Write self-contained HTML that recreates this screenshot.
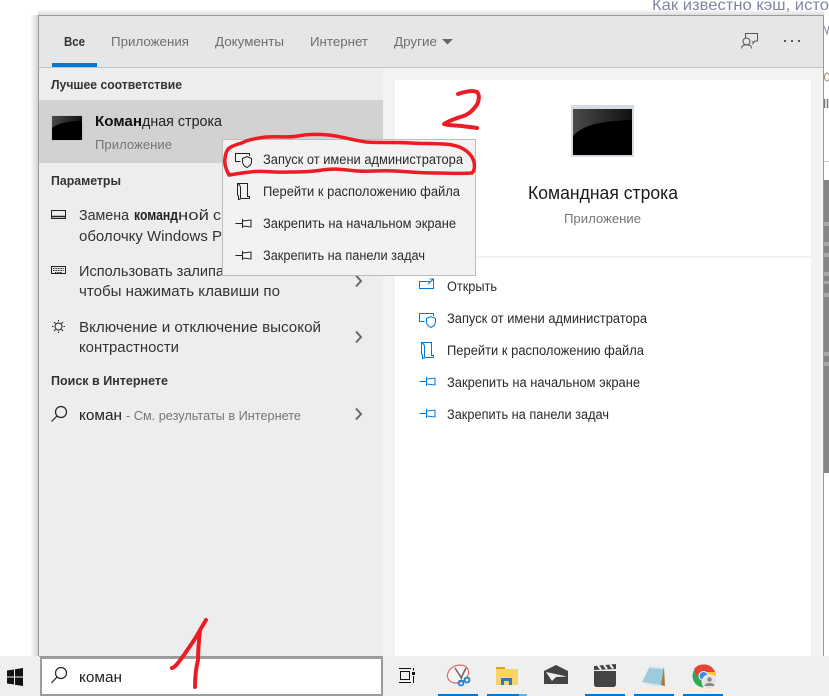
<!DOCTYPE html>
<html lang="ru">
<head>
<meta charset="utf-8">
<title>Поиск</title>
<style>
html,body{margin:0;padding:0;background:#fff;width:829px;height:696px;overflow:hidden}
svg{display:block}
text{font-family:"Liberation Sans","DejaVu Sans",sans-serif;font-size:13px;fill:#1f1f1f;white-space:pre}
.tab{fill:#6e6e6e}
.h{font-weight:bold;fill:#333}
.g{fill:#767676}
.b{font-size:15px;fill:#333}
.m{font-size:13.500px;fill:#2a2a2a}
.ic{fill:none;stroke:#222;stroke-width:1}
.bl{fill:none;stroke:#0078d7;stroke-width:1}
.red{fill:none;stroke:#ed1c24;stroke-linecap:round;stroke-linejoin:round}
</style>
</head>
<body>
<svg xmlns="http://www.w3.org/2000/svg" width="829" height="696" viewBox="0 0 829 696">
<defs>
<linearGradient id="sl" x1="0" x2="1" y1="0" y2="0"><stop offset="0" stop-color="#fff"/><stop offset="1" stop-color="#d4d4d4"/></linearGradient>
<linearGradient id="st" x1="0" x2="0" y1="0" y2="1"><stop offset="0" stop-color="#fff"/><stop offset="1" stop-color="#dcdcdc"/></linearGradient>
<linearGradient id="cmd" x1="0" x2="1" y1="0" y2="0"><stop offset="0" stop-color="#4a4a4a"/><stop offset="1" stop-color="#111"/></linearGradient>
<g id="pin"><path d="M0 5H7M7 .5V9.500M7 2.500L15.500 1.500V8.500L7 7.500"/></g>
<g id="adm"><path d="M5.500 8.500H.5V.5H14.500V3M7.500 5.500L12 3.500L16.500 5.500V9C16.500 11.500 14 13.500 12 14.500C10 13.500 7.500 11.500 7.500 9Z"/></g>
<g id="fold"><path d="M.5 .5H10.500V13.500H12.500V15.500H4.500L1.500 16.500V13L.5 12ZM.5 .5C2.500 1.500 3.500 3 3.500 5V15"/></g>
</defs>

<rect width="829" height="696" fill="#fff"/>

<!-- window shadow -->
<rect x="30" y="15" width="8" height="641" fill="url(#sl)"/>
<rect x="38" y="9" width="786" height="6" fill="url(#st)"/>

<!-- background page -->
<text x="652" y="10" style="font-size:16px;fill:#7f86a0" textLength="177" lengthAdjust="spacingAndGlyphs">Как известно кэш, исто</text>
<path d="M824 26L827 34L829 26" fill="none" stroke="#7f86a0"/>
<ellipse cx="827" cy="77" rx="2.500" ry="4" fill="none" stroke="#9a8a6a"/>
<path d="M824.500 99V108M827.500 99V108" stroke="#777" stroke-width="1.500"/>
<rect x="824" y="161" width="5" height="1" fill="#ccc"/>
<rect x="824" y="180" width="5" height="293" fill="#858585"/>
<g fill="#a8a8a8">
<rect x="824" y="222" width="5" height="4"/><rect x="824" y="242" width="5" height="4"/><rect x="824" y="253" width="5" height="4"/><rect x="824" y="272" width="5" height="4"/><rect x="824" y="281" width="5" height="3"/><rect x="824" y="293" width="5" height="4"/><rect x="824" y="352" width="5" height="4"/><rect x="824" y="362" width="5" height="4"/>
</g>

<!-- window -->
<rect x="38" y="15" width="786" height="641" fill="#9a9a9a"/>
<rect x="39" y="16" width="784" height="640" fill="#f3f3f3"/>
<rect x="39" y="16" width="784" height="51" fill="#e6e6e6"/>
<rect x="39" y="67" width="784" height="1" fill="#c4c4c4"/>
<rect x="39" y="68" width="344" height="588" fill="#ededed"/>
<rect x="395" y="80" width="416" height="576" fill="#fff"/>
<rect x="395" y="256" width="416" height="2" fill="#f2f2f2"/>

<!-- tabs -->
<text x="64" y="46" textLength="21" lengthAdjust="spacingAndGlyphs" style="font-weight:bold;fill:#333">Все</text>
<text class="tab" x="111" y="46" textLength="78" lengthAdjust="spacingAndGlyphs">Приложения</text>
<text class="tab" x="215" y="46" textLength="69" lengthAdjust="spacingAndGlyphs">Документы</text>
<text class="tab" x="310" y="46" textLength="58" lengthAdjust="spacingAndGlyphs">Интернет</text>
<text class="tab" x="394" y="46" textLength="43" lengthAdjust="spacingAndGlyphs">Другие</text>
<path d="M442 39H453L447.500 44.500Z" fill="#666"/>
<rect x="52" y="63" width="45" height="4" fill="#0078d7"/>

<!-- header right icons -->
<g fill="none" stroke="#555" stroke-width="1">
<path d="M745.500 38V33.500H757.500V41H755L753 43.500V41"/>
<circle cx="746.500" cy="41.500" r="3.500"/>
<path d="M741.500 48.500C741.500 45.500 744 44.800 746.500 44.800C749 44.800 751.500 45.500 751.500 48.500"/>
</g>
<g fill="#555"><rect x="784" y="40" width="2" height="2"/><rect x="791" y="40" width="2" height="2"/><rect x="798" y="40" width="2" height="2"/></g>

<!-- left list -->
<text class="h" x="51" y="89" textLength="131" lengthAdjust="spacingAndGlyphs">Лучшее соответствие</text>
<rect x="39" y="100" width="344" height="63" fill="#d2d2d2"/>
<rect x="51" y="115" width="32" height="26" fill="#c4c8cc"/>
<rect x="52" y="116" width="30" height="24" fill="url(#cmd)"/>
<path d="M52 128C58 123 68 121 82 121V140H52Z" fill="#000"/>
<text x="95" y="126" style="font-size:15px;font-weight:bold;fill:#111" textLength="47" lengthAdjust="spacingAndGlyphs">Коман</text>
<text x="142" y="126" style="font-size:15px;fill:#222" textLength="80" lengthAdjust="spacingAndGlyphs">дная строка</text>
<text class="g" x="95" y="149" textLength="77" lengthAdjust="spacingAndGlyphs">Приложение</text>

<text class="h" x="51" y="185" textLength="70" lengthAdjust="spacingAndGlyphs">Параметры</text>

<text class="b" x="79" y="220" textLength="50" lengthAdjust="spacingAndGlyphs">Замена</text>
<text x="134" y="220" style="font-size:15px;font-weight:bold;fill:#222" textLength="44" lengthAdjust="spacingAndGlyphs">команд</text>
<text class="b" x="178" y="220" textLength="31" lengthAdjust="spacingAndGlyphs">ной</text>
<text class="b" x="213" y="220" textLength="8" lengthAdjust="spacingAndGlyphs">с</text>
<text class="b" x="79" y="241" textLength="143" lengthAdjust="spacingAndGlyphs">оболочку Windows P</text>
<text class="b" x="79" y="276" textLength="145" lengthAdjust="spacingAndGlyphs">Использовать залипа</text>
<text class="b" x="79" y="296" textLength="201" lengthAdjust="spacingAndGlyphs">чтобы нажимать клавиши по</text>
<text class="b" x="79" y="332" textLength="242" lengthAdjust="spacingAndGlyphs">Включение и отключение высокой</text>
<text class="b" x="79" y="352" textLength="100" lengthAdjust="spacingAndGlyphs">контрастности</text>

<text class="h" x="51" y="385" textLength="117" lengthAdjust="spacingAndGlyphs">Поиск в Интернете</text>
<text x="79" y="420" style="font-size:15px;fill:#222" textLength="43" lengthAdjust="spacingAndGlyphs">коман</text>
<text class="g" x="126" y="420" textLength="175" lengthAdjust="spacingAndGlyphs">- См. результаты в Интернете</text>

<!-- left icons -->
<g class="ic">
<rect x="51.500" y="210.500" width="14" height="8"/><path d="M52 216.500H65" stroke-width="1.500"/>
<rect x="51.500" y="266.500" width="14" height="7"/>
</g>
<path d="M53 268.500H64M53 270.500H64M55 272.500H62" stroke="#222" stroke-width="1" stroke-dasharray="1 .6"/>
<g class="ic">
<circle cx="58.500" cy="326.500" r="3.500"/>
<path d="M58.500 320V321.500M58.500 331.500V333M52 326.500H53.500M63.500 326.500H65M54 322L55.500 323.500M61.500 329.500L63 331M63 322L61.500 323.500M55.500 329.500L54 331"/>
<circle cx="61" cy="412" r="5.500" stroke-width="1.200"/><path d="M57 416L51.500 421.500" stroke-width="1.200"/>
</g>
<g fill="none" stroke="#666" stroke-width="2">
<path d="M356 275.500L361 281L356 286.500"/>
<path d="M356 331.500L361 337L356 342.500"/>
<path d="M356 408.500L361 414L356 419.500"/>
</g>

<!-- context menu -->
<rect x="222.500" y="139.500" width="253" height="136" fill="#f2f2f2" stroke="#bdbdbd"/>
<text class="m" x="263" y="164" textLength="200" lengthAdjust="spacingAndGlyphs">Запуск от имени администратора</text>
<text class="m" x="263" y="196" textLength="197" lengthAdjust="spacingAndGlyphs">Перейти к расположению файла</text>
<text class="m" x="263" y="228" textLength="193" lengthAdjust="spacingAndGlyphs">Закрепить на начальном экране</text>
<text class="m" x="263" y="260" textLength="162" lengthAdjust="spacingAndGlyphs">Закрепить на панели задач</text>
<use href="#adm" x="235" y="153" class="ic"/>
<use href="#fold" x="237" y="183" class="ic"/>
<use href="#pin" x="235.500" y="218.500" class="ic"/>
<use href="#pin" x="235.500" y="250.500" class="ic"/>

<!-- right panel -->
<rect x="571" y="105" width="63" height="52" fill="#d5dbe3"/>
<rect x="573" y="109" width="59" height="46" fill="url(#cmd)"/>
<path d="M573 136C583 125 600 121 632 120V155H573Z" fill="#000"/>
<text x="528" y="199" style="font-size:18px;fill:#1a1a1a" textLength="150" lengthAdjust="spacingAndGlyphs">Командная строка</text>
<text class="g" x="564" y="223" textLength="77" lengthAdjust="spacingAndGlyphs">Приложение</text>

<text class="m" x="447" y="291" textLength="50" lengthAdjust="spacingAndGlyphs">Открыть</text>
<text class="m" x="447" y="323" textLength="200" lengthAdjust="spacingAndGlyphs">Запуск от имени администратора</text>
<text class="m" x="447" y="355" textLength="197" lengthAdjust="spacingAndGlyphs">Перейти к расположению файла</text>
<text class="m" x="447" y="387" textLength="193" lengthAdjust="spacingAndGlyphs">Закрепить на начальном экране</text>
<text class="m" x="447" y="419" textLength="162" lengthAdjust="spacingAndGlyphs">Закрепить на панели задач</text>
<path class="bl" d="M430 281.500H419.500V288.500H433.500V283M428 284L433.500 279M429.500 279H433.500V283"/>
<use href="#adm" x="419" y="313" class="bl"/>
<use href="#fold" x="421" y="342" class="bl"/>
<use href="#pin" x="419.500" y="376.500" class="bl"/>
<use href="#pin" x="419.500" y="408.500" class="bl"/>

<!-- taskbar -->
<rect x="0" y="656" width="829" height="40" fill="#eef0f0"/>
<rect x="39" y="656" width="344" height="1" fill="#9a9a9a"/>
<rect x="41" y="658" width="341" height="37" fill="#fff" stroke="#9c9c9c" stroke-width="2"/>
<g fill="#111">
<path d="M7 670.500L14 669.500V676.500H7ZM15 669.300L23 668V676.500H15ZM7 677.500H14V684.500L7 683.500ZM15 677.500H23V686L15 684.700Z"/>
</g>
<circle cx="61" cy="673" r="5.500" fill="none" stroke="#222" stroke-width="1.200"/>
<path d="M57 677L51.500 683" stroke="#222" stroke-width="1.200"/>
<text x="79" y="682" style="font-size:15px;fill:#222" textLength="43" lengthAdjust="spacingAndGlyphs">коман</text>

<!-- task view -->
<g fill="none" stroke="#111" stroke-width="1">
<path d="M399 668.500H411M399 682.500H411"/>
<rect x="400.500" y="671.500" width="9" height="8"/>
<path d="M413.500 668V670.500M413.500 676V683"/>
</g>
<rect x="412" y="672" width="3" height="3" fill="#111"/>

<!-- snipping -->
<ellipse cx="458" cy="674" rx="11" ry="8.500" transform="rotate(-25 458 674)" fill="#f6f3f3" stroke="#e66a6a" stroke-width="1.200"/>
<path d="M455 668L462 679M466 668L461 678" stroke="#666" stroke-width="1.500"/>
<circle cx="461" cy="683" r="2.500" fill="none" stroke="#1e7fc9" stroke-width="1.800"/>
<circle cx="467" cy="680" r="2.500" fill="none" stroke="#1e7fc9" stroke-width="1.800"/>

<!-- explorer -->
<path d="M496 667H505V670H496Z" fill="#e0a21b"/>
<rect x="496" y="669" width="22" height="16" fill="#fbd469"/>
<path d="M501 685V678H512V685H509V681H504V685Z" fill="#2a78c6"/>

<!-- mail -->
<path d="M544 671L556 665L568 671V684H544Z" fill="#444"/>
<path d="M546 672L567 676.500L556 677L552 681Z" fill="#eee"/>

<!-- clapper -->
<path d="M594 671H616V684C616 686 615 687 613 687H597C595 687 594 686 594 684Z" fill="#444"/>
<path d="M594 666L616 664V669L594 670Z" fill="#444"/>
<path d="M598 665.500L601 669.500M604 665L607 669M610 664.500L613 668.500" stroke="#eef0f0" stroke-width="2"/>

<!-- notepad -->
<path d="M650 666L664 667V686L642 682Z" fill="#9ccbdc"/>
<path d="M650 666L664 667L663 669L650 668Z" fill="#dfe9ec"/>
<path d="M664 667L665 686L661 685Z" fill="#a87a3a"/>
<path d="M642 682L661 685L664 687L648 685Z" fill="#dbe7ea"/>

<!-- chrome -->
<circle cx="704" cy="676" r="11.500" fill="#34a853"/>
<path d="M704 664.500A11.500 11.500 0 0 1 715 672H704C700 672 698 674 697 677L694 669A11.500 11.500 0 0 1 704 664.500Z" fill="#ea4335"/>
<path d="M707 672H715.500L716 677L708 682Z" fill="#fbc02d"/>
<circle cx="703.500" cy="676" r="5" fill="#fff"/><circle cx="703.500" cy="676" r="4" fill="#4285f4"/>
<circle cx="709.500" cy="682" r="7.500" fill="#e4e4e4" stroke="#fff" stroke-width=".6"/>
<circle cx="709.500" cy="679.500" r="2.300" fill="#8a8a8a"/>
<path d="M704.500 686C705 683.500 707 683 709.500 683C712 683 714 683.500 714.500 686Z" fill="#8a8a8a"/>

<!-- taskbar underlines -->
<g fill="#0078d7">
<rect x="438" y="694" width="40" height="2"/>
<rect x="487" y="694" width="32" height="2"/>
<rect x="585" y="694" width="40" height="2"/>
<rect x="634" y="694" width="40" height="2"/>
<rect x="683" y="694" width="40" height="2"/>
</g>
<rect x="519" y="694" width="8" height="2" fill="#66aee7"/>

<!-- red annotations -->
<path class="red" stroke-width="3.500" d="M229 175C226 169 224 164 225 158C226 152 227 149 231 147C236 144 241 144 246 141C252 139 258 138 266 137C277 136 288 138 298 136C308 134 318 134 328 135C340 136 352 140 366 142C380 143 395 142 410 143C425 144 440 143 452 145C464 147 472 154 474 162C475 167 474 171 472 173C460 174 448 173 436 173C420 173 408 172 395 171C380 170 370 172 358 171C345 170 335 168 322 170C310 172 300 172 290 172C275 173 262 170 250 172C242 173 235 174 229 175"/>
<path class="red" stroke-width="4" d="M458 94C464 92 472 90 477 92C480 95 479 102 476 106C473 110 470 113 466 115C458 118 450 120 444 124C450 126 456 125 462 126C467 127 472 127 477 128"/>
<path class="red" stroke-width="4" d="M172 668C176 667 180 660 184 655C190 646 196 638 200 630L206 620M200 630C199 640 198 650 198 660C196 668 195 678 195 687"/>
</svg>
</body>
</html>
